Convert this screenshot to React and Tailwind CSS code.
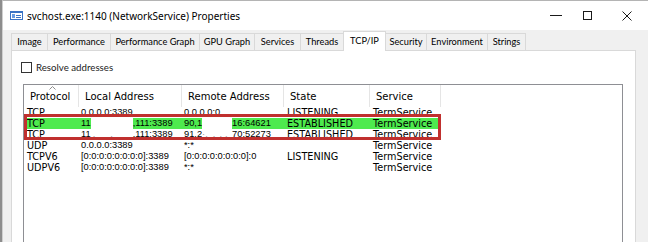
const tabs = [
  { label: "Image", w: "w-[36px]" },
  { label: "Performance", w: "w-[63px]" },
  { label: "Performance Graph", w: "w-[89px]" },
  { label: "GPU Graph", w: "w-[55px]" },
  { label: "Services", w: "w-[46px]" },
  { label: "Threads", w: "w-[43px]" },
  { label: "TCP/IP", w: "w-[43px]", active: true },
  { label: "Security", w: "w-[40px]", afterActive: true },
  { label: "Environment", w: "w-[61px]" },
  { label: "Strings", w: "w-[39px]", last: true },
];

const columns = [
  { label: "Protocol", w: "w-[55px]" },
  { label: "Local Address", w: "w-[103px]" },
  { label: "Remote Address", w: "w-[102px]" },
  { label: "State", w: "w-[86px]" },
  { label: "Service", w: "w-[71px]" },
];

// address columns use a face with narrower digits, like the original list font
const cellW = [
  "w-[55px] pl-[3px]",
  "w-[103px] pl-[2px] font-['Liberation_Sans',sans-serif] text-[9.3px]",
  "w-[102px] pl-[2px] font-['Liberation_Sans',sans-serif] text-[9.3px]",
  "w-[86px] pl-[3px]",
  "w-[71px] pl-[3px]",
];

function Blank({ w, children }) {
  return (
    <span className={`inline-block h-[11px] bg-white align-top ${w}`}>
      {children}
    </span>
  );
}

const rows = [
  { cells: ["TCP", "0.0.0.0:3389", "0.0.0.0:0", "LISTENING", "TermService"] },
  {
    green: true,
    cells: [
      "TCP",
      <>
        11<Blank w="w-[42px]" />,111:3389
      </>,
      <>
        90,1<Blank w="w-[30px]" />16:64621
      </>,
      "ESTABLISHED",
      "TermService",
    ],
  },
  {
    cells: [
      "TCP",
      <>
        11
        <Blank w="w-[42px] text-[#9a9a9a]">
          <span className="pl-[2px]">,</span>
          <span className="pl-[15px]">,</span>
        </Blank>
        ,111:3389
      </>,
      <>
        91,2
        <Blank w="w-[30px] text-[#9a9a9a]">
          <span>·.</span>
          <span className="pl-[5px]">,</span>
          <span className="pl-[4px]">.</span>
          <span className="pl-[3px]">,</span>
        </Blank>
        70:52273
      </>,
      "ESTABLISHED",
      "TermService",
    ],
  },
  { cells: ["UDP", "0.0.0.0:3389", "*:*", "", "TermService"] },
  { cells: ["TCPV6", "[0:0:0:0:0:0:0:0]:3389", "[0:0:0:0:0:0:0:0]:0", "LISTENING", "TermService"] },
  { cells: ["UDPV6", "[0:0:0:0:0:0:0:0]:3389", "*:*", "", "TermService"] },
];

function AppIcon() {
  return (
    <svg width="13" height="9" viewBox="0 0 13 9" className="shrink-0">
      <rect x="0" y="0" width="13" height="9" fill="#3a73c4" />
      <rect x="1" y="2" width="11" height="6" fill="#ffffff" />
      <rect x="2" y="3" width="3" height="4" fill="#6a9ce0" />
      <rect x="6" y="4" width="5" height="1" fill="#3a73c4" />
      <rect x="6" y="6" width="5" height="1" fill="#3a73c4" />
    </svg>
  );
}

function WindowControls() {
  return (
    <div className="ml-auto mr-[16px] flex items-center">
      <svg width="12" height="10" viewBox="0 0 12 10">
        <rect x="0" y="4" width="12" height="1" fill="#1a1a1a" />
      </svg>
      <svg width="9" height="9" viewBox="0 0 9 9" className="ml-[21px]">
        <rect x="0.5" y="0.5" width="8" height="8" fill="none" stroke="#1a1a1a" />
      </svg>
      <svg width="10" height="10" viewBox="0 0 10 10" className="ml-[30px]">
        <path d="M0.5 0.5 L9.5 9.5 M9.5 0.5 L0.5 9.5" stroke="#1a1a1a" strokeWidth="1" />
      </svg>
    </div>
  );
}

export default function App() {
  return (
    <div className="flex h-[242px] w-[648px] overflow-hidden bg-[#f0f0f0] font-['Noto_Sans',sans-serif]">
      {/* desktop sliver at the left */}
      <div className="w-[2px] shrink-0 bg-[#8d8d8d]" />

      <div className="flex min-w-0 flex-1 flex-col border-l border-t border-l-[#cfcfcf] border-t-[#b4b4b4]">
        {/* title bar */}
        <div className="flex h-[29px] shrink-0 items-center bg-white">
          <div className="ml-[7px]">
            <AppIcon />
          </div>
          <span className="ml-[4px] text-[10px] leading-none text-black">
            svchost.exe:1140 (NetworkService) Properties
          </span>
          <WindowControls />
        </div>

        {/* dialog body */}
        <div className="flex flex-1 flex-col pl-[8px] pr-[12px] pt-[1px]">
          <div className="flex h-[19px] items-end font-['Lato',sans-serif] text-[9.25px] text-black">
            {tabs.map((t) =>
              t.active ? (
                <div
                  key={t.label}
                  className={`relative z-10 -mb-px flex h-[20px] items-center justify-center border-x border-t border-[#d9d9d9] bg-white pb-[1px] ${t.w}`}
                >
                  {t.label}
                </div>
              ) : (
                <div
                  key={t.label}
                  className={`flex h-[17px] items-center justify-center border-t border-[#d9d9d9] bg-[#f0f0f0] ${
                    t.afterActive ? "" : "border-l"
                  } ${t.last ? "border-r" : ""} ${t.w}`}
                >
                  {t.label}
                </div>
              ),
            )}
          </div>

          {/* tab page */}
          <div className="flex flex-1 flex-col border-x border-t border-[#d9d9d9] bg-white pl-[9px] pt-[11px]">
            <label className="flex h-[11px] items-center gap-[4px] font-['Lato',sans-serif] text-[9.7px] text-[#1a1a1a]">
              <span className="block h-[11px] w-[11px] border border-[#333333] bg-white" />
              Resolve addresses
            </label>

            {/* list view */}
            <div className="relative ml-[2px] mt-[11px] h-[200px] w-[600px] border-l border-r border-t border-[#8e8f94] bg-white font-['DejaVu_Sans',sans-serif] text-black">
              <div className="flex h-[22px] text-[10px]">
                {columns.map((c, i) => (
                  <div
                    key={c.label}
                    className={`relative flex items-center border-r border-[#e5e5e5] pl-[6px] ${c.w}`}
                  >
                    {i === 0 && (
                      <svg
                        width="7"
                        height="4"
                        viewBox="0 0 7 4"
                        className="absolute left-[25px] top-[1px]"
                      >
                        <path d="M0.5 3.5 L3.5 0.5 L6.5 3.5" fill="none" stroke="#8c8c8c" strokeWidth="1" />
                      </svg>
                    )}
                    {c.label}
                  </div>
                ))}
              </div>

              {rows.map((r, ri) => (
                <div
                  key={ri}
                  className={`flex h-[11px] w-[417px] whitespace-nowrap text-[9.7px] leading-[11px] ${
                    r.green ? "bg-[#4eea4e]" : ""
                  }`}
                >
                  {r.cells.map((c, ci) => (
                    <div key={ci} className={`overflow-hidden ${cellW[ci]}`}>
                      {c}
                    </div>
                  ))}
                </div>
              ))}

              {/* red annotation frame */}
              <div className="pointer-events-none absolute left-0 top-[29px] h-[26px] w-[417px] border-[3px] border-[#c0302e]" />
            </div>
          </div>
        </div>
      </div>
    </div>
  );
}
